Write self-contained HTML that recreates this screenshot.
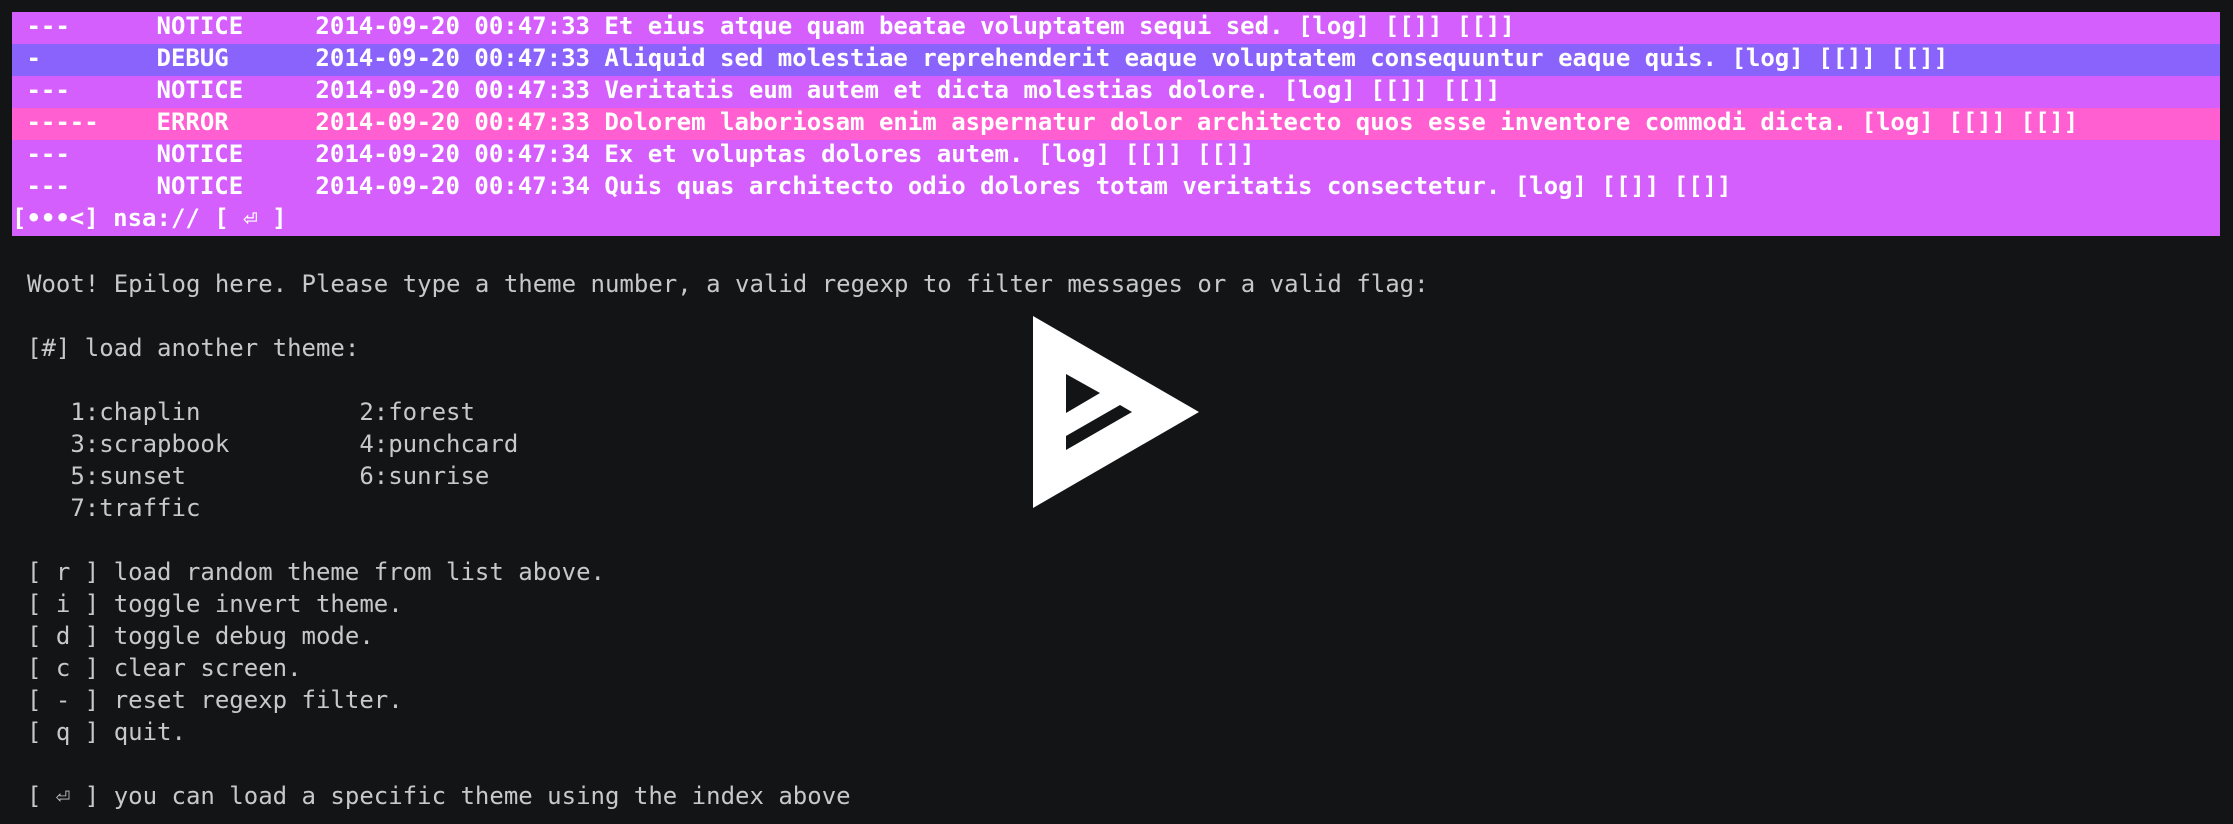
<!DOCTYPE html>
<html><head><meta charset="utf-8"><style>
html,body{margin:0;padding:0;background:#131416;width:2233px;height:824px;overflow:hidden}
.panel{position:absolute;left:12px;top:12px;width:2208px}
.row{height:32px;line-height:32px;font:bold 24px "DejaVu Sans Mono","Liberation Mono",monospace;color:#fff;white-space:pre;padding-left:0px}
.n{background:#d55ffc}.d{background:#8a63fd}.e{background:#ff5fd1}
pre{position:absolute;left:27px;top:268px;margin:0;font:24px "DejaVu Sans Mono","Liberation Mono",monospace;line-height:32px;color:#c8c8c8}
svg{position:absolute;left:0;top:0}
</style></head><body>
<div class="panel">
<div class="row n"> ---      NOTICE     2014-09-20 00:47:33 Et eius atque quam beatae voluptatem sequi sed. [log] [[]] [[]]</div>
<div class="row d"> -        DEBUG      2014-09-20 00:47:33 Aliquid sed molestiae reprehenderit eaque voluptatem consequuntur eaque quis. [log] [[]] [[]]</div>
<div class="row n"> ---      NOTICE     2014-09-20 00:47:33 Veritatis eum autem et dicta molestias dolore. [log] [[]] [[]]</div>
<div class="row e"> -----    ERROR      2014-09-20 00:47:33 Dolorem laboriosam enim aspernatur dolor architecto quos esse inventore commodi dicta. [log] [[]] [[]]</div>
<div class="row n"> ---      NOTICE     2014-09-20 00:47:34 Ex et voluptas dolores autem. [log] [[]] [[]]</div>
<div class="row n"> ---      NOTICE     2014-09-20 00:47:34 Quis quas architecto odio dolores totam veritatis consectetur. [log] [[]] [[]]</div>
<div class="row n">[•••&lt;] nsa:// [ ⏎ ]</div>
</div>
<pre>Woot! Epilog here. Please type a theme number, a valid regexp to filter messages or a valid flag:

[#] load another theme:

   1:chaplin           2:forest
   3:scrapbook         4:punchcard
   5:sunset            6:sunrise
   7:traffic

[ r ] load random theme from list above.
[ i ] toggle invert theme.
[ d ] toggle debug mode.
[ c ] clear screen.
[ - ] reset regexp filter.
[ q ] quit.

[ ⏎ ] you can load a specific theme using the index above</pre>
<svg width="2233" height="824">
<path fill="#fff" fill-rule="evenodd" d="M1033 316 L1199 412 L1033 508 Z M1066 374 L1100 393 L1066 413 Z M1066 436 L1120 405 L1132 412 L1066 450 Z"/>
</svg>
</body></html>
